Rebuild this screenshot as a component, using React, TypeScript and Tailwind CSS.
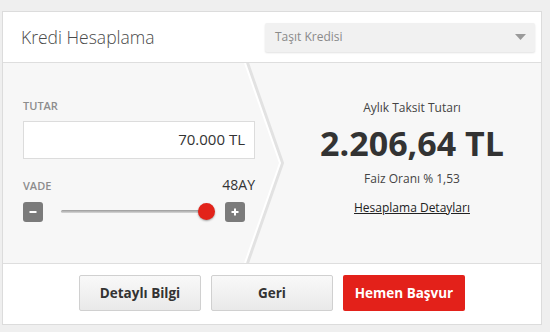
import { useState } from 'react';

const FONT = { fontFamily: '"Open Sans", "Noto Sans", sans-serif' };

function StepButton({ sign }: { sign: '-' | '+' }) {
  return (
    <button className="flex h-[20px] w-[20px] items-center justify-center rounded-[3px] bg-[#7b7b7b] text-white">
      <svg width="10" height="10" viewBox="0 0 10 10">
        <rect x="1.5" y="4" width="7" height="2" fill="#fff" />
        {sign === '+' ? <rect x="4" y="1.5" width="2" height="7" fill="#fff" /> : null}
      </svg>
    </button>
  );
}

export default function App() {
  const [months] = useState(48);

  return (
    <div className="h-[332px] w-[550px] bg-[#efefef] pt-[11px] pl-[2px]" style={FONT}>
      <div className="w-[540px] border border-[#dcdcdc] bg-white">
        {/* header */}
        <div className="flex h-[51px] items-center justify-between border-b border-[#dedede] pl-[18px] pr-[6px]">
          <h1 className="text-[17.5px] font-light text-[#4a4a4a]">Kredi Hesaplama</h1>
          <div className="flex h-[29px] w-[270px] items-center justify-between rounded-[2px] bg-[#f1f1f1] pl-[10px] pr-[9px] shadow-[0_1px_2px_rgba(0,0,0,0.12)]">
            <span className="text-[12px] text-[#8a8a8a]">Taşıt Kredisi</span>
            <svg width="11" height="6" viewBox="0 0 11 6">
              <path d="M0 0 H11 L5.5 6 Z" fill="#9a9a9a" />
            </svg>
          </div>
        </div>

        {/* body */}
        <div className="relative flex h-[200px] bg-[#f7f7f7]">
          <div className="w-[276px] pl-[20px] pt-[35px]">
            <div className="text-[11px] font-semibold text-[#8d8d8d]">TUTAR</div>
            <div className="mt-[6px] flex h-[38px] w-[232px] items-center justify-end border border-[#dcdcdc] bg-white pr-[9px] text-[15px] text-[#333]">
              70.000 TL
            </div>
            <div className="mt-[16px] flex h-[20px] w-[232px] items-end justify-between">
              <span className="text-[11px] font-semibold text-[#8d8d8d]">VADE</span>
              <span className="text-[14px] text-[#333]">{months}AY</span>
            </div>
            <div className="mt-[7px] flex w-[222px] items-center">
              <StepButton sign="-" />
              <div className="relative ml-[18px] h-[3px] w-[145px] rounded-full bg-gradient-to-b from-[#9a9a9a] to-[#d8d8d8]">
                <div className="absolute right-[-9px] top-[-7px] h-[17px] w-[17px] rounded-full bg-[#e2231a] shadow-[0_1px_2px_rgba(0,0,0,0.35)]" />
              </div>
              <div className="ml-auto">
                <StepButton sign="+" />
              </div>
            </div>
          </div>

          <div className="flex flex-1 flex-col items-center pl-[4px] pt-[36px] text-[#444]">
            <div className="text-[12px]">Aylık Taksit Tutarı</div>
            <div className="mt-[4px] text-[34px] font-bold leading-[44px] text-[#333]">2.206,64 TL</div>
            <div className="mt-[5px] text-[12px]">Faiz Oranı % 1,53</div>
            <a className="mt-[11px] text-[12px] text-[#222] underline">Hesaplama Detayları</a>
          </div>

          {/* chevron divider */}
          <svg className="pointer-events-none absolute left-[236px] top-0" width="50" height="200" viewBox="0 0 50 200">
            <polyline points="8,0 43,100 8,200" fill="none" stroke="#e2e2e2" strokeWidth="4" />
            <polyline points="6,0 41,100 6,200" fill="none" stroke="#ffffff" strokeWidth="2" />
          </svg>
        </div>

        {/* footer */}
        <div className="flex h-[61px] items-center justify-center gap-[10px] border-t border-[#dedede] pb-[2px]">
          <button className="h-[36px] w-[122px] rounded-[2px] border border-[#d0d0d0] bg-gradient-to-b from-[#f9f9f9] to-[#e9e9e9] text-[13.5px] font-bold text-[#333]">
            Detaylı Bilgi
          </button>
          <button className="h-[36px] w-[122px] rounded-[2px] border border-[#d0d0d0] bg-gradient-to-b from-[#f9f9f9] to-[#e9e9e9] text-[13.5px] font-bold text-[#333]">
            Geri
          </button>
          <button className="h-[36px] w-[122px] rounded-[2px] bg-[#e3211a] text-[13.5px] font-bold text-white">
            Hemen Başvur
          </button>
        </div>
      </div>
    </div>
  );
}
